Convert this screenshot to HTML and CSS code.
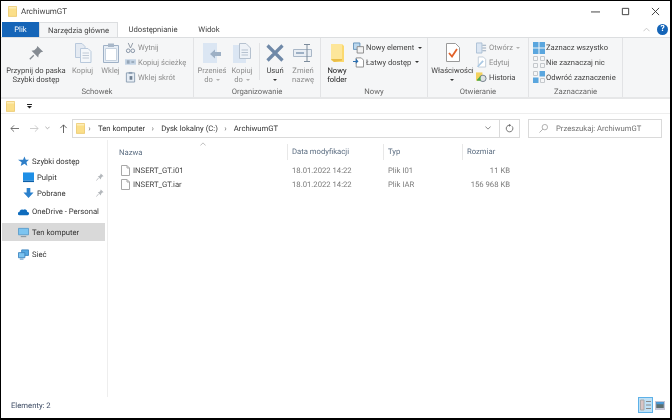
FILE: index.html
```html
<!DOCTYPE html>
<html lang="pl">
<head>
<meta charset="utf-8">
<title>ArchiwumGT</title>
<link rel="stylesheet" href="styles.css">
</head>
<body>
<svg class="defs" width="0" height="0" aria-hidden="true">
  <defs>
    <symbol id="folder" viewBox="0 0 12 14">
      <path d="M0.500 0.500H11.500V13.500H0.500Z" fill="#fbdf8a" stroke="#e8c25e" stroke-width="1"/>
      <path d="M1 1H11V3H1Z" fill="#fdeeb8"/>
    </symbol>
    <symbol id="doc" viewBox="0 0 9 11">
      <path d="M0.500 0.500H6L8.500 3V10.500H0.500Z" fill="#fff" stroke="#a8a8a8"/>
      <path d="M6 0.500V3H8.500" fill="none" stroke="#a8a8a8"/>
    </symbol>
    <symbol id="pin" viewBox="0 0 10 10">
      <path d="M6 0.500L9.500 4L8 4.500L6.500 6L6 8L2.200 4.200L4.200 3.600L5.600 2Z" fill="#b4b8bc"/>
      <path d="M3.200 6.200L0.500 9.500" stroke="#b4b8bc" fill="none"/>
    </symbol>
  </defs>
</svg>
<div class="window">
  <header class="titlebar">
    <svg class="title-icon"><use href="#folder"/></svg>
    <span class="title-text">ArchiwumGT</span>
    <div class="win-controls">
      <svg class="win-btn" viewBox="0 0 10 10"><path d="M0 5.500H10" stroke="#333"/></svg>
      <svg class="win-btn" viewBox="0 0 10 10"><path d="M1.500 1.500H8.500V8.500H1.500Z" fill="none" stroke="#333"/></svg>
      <svg class="win-btn" viewBox="0 0 10 10"><path d="M1 1L9 9M9 1L1 9" stroke="#333" fill="none"/></svg>
    </div>
  </header>

  <nav class="tabs">
    <span class="tab tab-file">Plik</span>
    <span class="tab tab-active">Narzędzia główne</span>
    <span class="tab tab-share">Udostępnianie</span>
    <span class="tab tab-view">Widok</span>
    <div class="tabs-right">
      <svg class="collapse" viewBox="0 0 8 5"><path d="M0.500 4.500L4 1L7.500 4.500" fill="none" stroke="#c4c4c4"/></svg>
      <span class="help">?</span>
    </div>
  </nav>

  <section class="ribbon">
    <div class="group g-clip">
      <div class="group-body">
        <div class="big w-pin">
          <svg class="big-icon" viewBox="0 0 18 18"><path d="M10.500 1L17 7.500L14.500 8.200L12 11L11.500 14L4 6.500L7 6L9.800 3.500Z" fill="#858b92"/><path d="M6.500 11.500L2 16" stroke="#858b92" stroke-width="1.500"/></svg>
          <span class="lbl">Przypnij do paska<br>Szybki dostęp</span>
        </div>
        <div class="big w-copy dis">
          <svg class="big-icon" viewBox="0 0 18 20"><path d="M1.500 0.500H8L11 3.500V14.500H1.500Z" fill="#e4eaf2" stroke="#b9c9dc"/><path d="M6.500 5.500H14L17 8.500V19.500H6.500Z" fill="#f4f7fa" stroke="#b9c9dc"/><path d="M8.500 10H15M8.500 12.500H15M8.500 15H15" stroke="#c0cad6"/></svg>
          <span class="lbl">Kopiuj</span>
        </div>
        <div class="big w-paste dis">
          <svg class="big-icon" viewBox="0 0 16 20"><path d="M0.500 2.500H15.500V19.500H0.500Z" fill="#e6edf5" stroke="#9fb1c6"/><path d="M2.500 5.500H13.500V17.500H2.500Z" fill="#fff" stroke="#c6d2df"/><path d="M5 0.500H11V4H5Z" fill="#a9b8c9"/></svg>
          <span class="lbl">Wklej</span>
        </div>
        <div class="small-col col-clip">
          <div class="small dis">
            <svg class="s-icon" viewBox="0 0 12 12"><path d="M3.500 0.500L6 6M8.500 0.500L6 6" stroke="#8a94a0" fill="none"/><circle cx="3.500" cy="9" r="2" fill="none" stroke="#7e8ca0"/><circle cx="8.500" cy="9" r="2" fill="none" stroke="#7e8ca0"/></svg>
            <span>Wytnij</span>
          </div>
          <div class="small dis">
            <svg class="s-icon" viewBox="0 0 12 12"><path d="M0 3H12V9H0Z" fill="#c3d3e4"/><path d="M2 5H5M2 7H5M7 6H10" stroke="#6f7f91"/></svg>
            <span>Kopiuj ścieżkę</span>
          </div>
          <div class="small dis">
            <svg class="s-icon" viewBox="0 0 12 12"><path d="M1.500 1.500H10.500V11.500H1.500Z" fill="#e6edf5" stroke="#8a9cb0"/><path d="M4 0.500H8V2.500H4Z" fill="#8a9cb0"/><path d="M5 5H8V9H5Z" fill="#6f7f91"/></svg>
            <span>Wklej skrót</span>
          </div>
        </div>
      </div>
      <div class="group-name">Schowek</div>
    </div>

    <div class="group g-org">
      <div class="group-body">
        <div class="big w-move dis">
          <svg class="big-icon" viewBox="0 0 18 20"><path d="M0 0H14V20H0Z" fill="#dbe6f3"/><path d="M7 11L12 6.500V9H18V13H12V15.500Z" fill="#9db0c5"/></svg>
          <span class="lbl">Przenieś<br>do <i class="caret-dis"></i></span>
        </div>
        <div class="big w-copyto dis">
          <svg class="big-icon" viewBox="0 0 18 20"><path d="M0 2H13V20H0Z" fill="#dbe6f3"/><path d="M6.500 0.500H13L17.500 5V15.500H6.500Z" fill="#eef2f7" stroke="#b5c1cf"/><path d="M8.500 7H15M8.500 9.500H15M8.500 12H15" stroke="#b5c1cf"/></svg>
          <span class="lbl">Kopiuj<br>do <i class="caret-dis"></i></span>
        </div>
        <div class="org-sep"></div>
        <div class="big w-del">
          <svg class="big-icon del-icon" viewBox="0 0 18 18"><path d="M1.500 1.500L16.500 16.500M16.500 1.500L1.500 16.500" stroke="#6f89a8" stroke-width="3.200"/></svg>
          <span class="lbl">Usuń<br><i class="caret"></i></span>
        </div>
        <div class="big w-ren dis">
          <svg class="big-icon ren-icon" viewBox="0 0 20 18"><path d="M0.500 5.500H18.500V12.500H0.500Z" fill="#e9eef4" stroke="#a9b7c7"/><path d="M3 8H11V10H3Z" fill="#9db0c5"/><path d="M11 0.500H17M11 17.500H17M14 0.500V17.500" stroke="#7d8c9c" fill="none"/></svg>
          <span class="lbl">Zmień<br>nazwę</span>
        </div>
      </div>
      <div class="group-name">Organizowanie</div>
    </div>

    <div class="group g-new">
      <div class="group-body">
        <div class="big w-newf">
          <svg class="big-icon folder-big" viewBox="0 0 13 18"><path d="M0 0H11L13 2V18H3L0 16Z" fill="#fbd96f"/><path d="M0 0H11V15H0Z" fill="#fde69a"/><path d="M0 15H11V16.500L3 18Z" fill="#e9bd48"/></svg>
          <span class="lbl strong">Nowy<br>folder</span>
        </div>
        <div class="small-col col-new">
          <div class="small">
            <svg class="s-icon" viewBox="0 0 12 12"><path d="M0.500 0.500H7.500V7.500H0.500Z" fill="#bcd8ee" stroke="#5f8fb8"/><path d="M4.500 4.500H11.500V11.500H4.500Z" fill="#f2f2f2" stroke="#888"/></svg>
            <span>Nowy element</span><i class="caret caret-inline"></i>
          </div>
          <div class="small">
            <svg class="s-icon" viewBox="0 0 12 12"><path d="M3.500 1.500H9L11.500 4V11.500H3.500Z" fill="#fff" stroke="#888"/><path d="M0 5H3V2L6 5.500L3 8V6H0Z" fill="#2c6fb0"/></svg>
            <span>Łatwy dostęp</span><i class="caret caret-inline"></i>
          </div>
        </div>
      </div>
      <div class="group-name">Nowy</div>
    </div>

    <div class="group g-open">
      <div class="group-body">
        <div class="big w-prop">
          <svg class="big-icon" viewBox="0 0 14 19"><path d="M0.500 0.500H9.500L13.500 4.500V18.500H0.500Z" fill="#fff" stroke="#9a9a9a"/><path d="M3 10L6 13.500L11 6" fill="none" stroke="#e2622a" stroke-width="1.800"/></svg>
          <span class="lbl">Właściwości<br><i class="caret"></i></span>
        </div>
        <div class="small-col col-open">
          <div class="small dis">
            <svg class="s-icon" viewBox="0 0 12 12"><path d="M0.500 0.500H6.500V11.500H0.500Z" fill="#dbe6f3" stroke="#a9bdd3"/><path d="M7 3H11M7 6H11M7 9H11" stroke="#8fa3b8"/></svg>
            <span>Otwórz</span><i class="caret-dis caret-inline"></i>
          </div>
          <div class="small dis">
            <svg class="s-icon" viewBox="0 0 12 12"><path d="M2.500 0.500H8L10.500 3V11.500H2.500Z" fill="#fff" stroke="#c0ccd8"/><path d="M1 11L7 4L8.500 5.500L2.500 11.500Z" fill="#a9c8e4"/></svg>
            <span>Edytuj</span>
          </div>
          <div class="small">
            <svg class="s-icon" viewBox="0 0 12 12"><path d="M0 1H7V10H0Z" fill="#f3d25e"/><circle cx="7.500" cy="7.500" r="3.500" fill="#dfe3e6" stroke="#6d7a85"/><path d="M1 9L5 5V10H1Z" fill="#4aa84a"/></svg>
            <span>Historia</span>
          </div>
        </div>
      </div>
      <div class="group-name">Otwieranie</div>
    </div>

    <div class="group g-sel">
      <div class="group-body">
        <div class="small-col col-sel">
          <div class="small">
            <svg class="s-icon sel" viewBox="0 0 12 12"><path d="M0 0H5.500V5.500H0ZM6.500 0H12V5.500H6.500ZM0 6.500H5.500V12H0ZM6.500 6.500H12V12H6.500Z" fill="#5aa6de"/></svg>
            <span>Zaznacz wszystko</span>
          </div>
          <div class="small">
            <svg class="s-icon sel" viewBox="0 0 12 12"><path d="M0.500 0.500H4.500V4.500H0.500ZM7.500 0.500H11.500V4.500H7.500ZM0.500 7.500H4.500V11.500H0.500ZM7.500 7.500H11.500V11.500H7.500Z" fill="none" stroke="#c4c8cc"/></svg>
            <span>Nie zaznaczaj nic</span>
          </div>
          <div class="small">
            <svg class="s-icon sel" viewBox="0 0 12 12"><path d="M6.500 0H12V5.500H6.500ZM0 6.500H5.500V12H0Z" fill="#5aa6de"/><path d="M0.500 0.500H4.500V4.500H0.500ZM7.500 7.500H11.500V11.500H7.500Z" fill="none" stroke="#c4c8cc"/></svg>
            <span>Odwróć zaznaczenie</span>
          </div>
        </div>
      </div>
      <div class="group-name">Zaznaczanie</div>
    </div>
  </section>

  <div class="qat">
    <svg class="qat-folder"><use href="#folder"/></svg>
    <svg class="qat-drop" viewBox="0 0 5 5"><path d="M0 0.500H5" stroke="#222"/><path d="M0 2H5L2.500 4.500Z" fill="#222"/></svg>
  </div>

  <div class="navbar">
    <div class="nav-btns">
      <svg class="nav-arrow" viewBox="0 0 10 10"><path d="M10 5H1M4.500 1.500L1 5L4.500 8.500" fill="none" stroke="#666"/></svg>
      <svg class="nav-arrow nav-fwd" viewBox="0 0 10 10"><path d="M0 5H9M5.500 1.500L9 5L5.500 8.500" fill="none" stroke="#c8c8c8"/></svg>
      <svg class="nav-chev" viewBox="0 0 6 4"><path d="M0.500 0.500L3 3L5.500 0.500" fill="none" stroke="#a0a0a0"/></svg>
      <svg class="nav-arrow nav-up" viewBox="0 0 10 10"><path d="M5 10V1M1.500 4.500L5 1L8.500 4.500" fill="none" stroke="#555"/></svg>
    </div>
    <div class="address">
      <svg class="addr-folder"><use href="#folder"/></svg>
      <span class="crumb-sep">›</span><span class="crumb">Ten komputer</span>
      <span class="crumb-sep">›</span><span class="crumb">Dysk lokalny (C:)</span>
      <span class="crumb-sep">›</span><span class="crumb">ArchiwumGT</span>
      <svg class="addr-chev" viewBox="0 0 8 5"><path d="M0.500 0.500L4 4L7.500 0.500" fill="none" stroke="#666"/></svg>
      <div class="addr-refresh">
        <svg viewBox="0 0 10 10" width="9" height="9"><path d="M7.800 2.500A3.700 3.700 0 1 1 5 1.300" fill="none" stroke="#666"/><path d="M4.500 0L7 1.500L4.500 3Z" fill="#666"/></svg>
      </div>
    </div>
    <div class="search">
      <svg class="search-icon" viewBox="0 0 10 10"><circle cx="6.500" cy="3.500" r="3" fill="none" stroke="#a8a8a8"/><path d="M4.300 5.700L0.500 9.500" stroke="#a8a8a8"/></svg>
      <span>Przeszukaj: ArchiwumGT</span>
    </div>
  </div>

  <main class="content">
    <aside class="sidebar">
      <div class="side-item lvl0 first">
        <svg class="side-icon" viewBox="0 0 12 12"><path d="M7 0.500L8.500 4H12L9.200 6.500L10.200 11L7 8.500L3 11L4 6.800L0 4H5.500Z" fill="#2f7fc8"/></svg>
        <span>Szybki dostęp</span>
      </div>
      <div class="side-item lvl1">
        <svg class="side-icon" viewBox="0 0 12 11"><path d="M0 0H12V9H0Z" fill="#1e8fe6"/><path d="M0 9H12V10.500H0Z" fill="#0d5fa8"/></svg>
        <span>Pulpit</span>
        <svg class="side-pin"><use href="#pin"/></svg>
      </div>
      <div class="side-item lvl1">
        <svg class="side-icon" viewBox="0 0 12 12"><path d="M4 0H8V5H11.500L6 11L0.500 5H4Z" fill="#2a80cc"/></svg>
        <span>Pobrane</span>
        <svg class="side-pin"><use href="#pin"/></svg>
      </div>
      <div class="side-item lvl0 onedrive">
        <svg class="side-icon" viewBox="0 0 12 8"><path d="M1.500 8A1.500 1.500 0 0 1 1.500 4.500A3 3 0 0 1 6 2.200A2.500 2.500 0 0 1 10 4.500A1.700 1.700 0 0 1 10.500 8Z" fill="#0f6cbd"/></svg>
        <span>OneDrive - Personal</span>
      </div>
      <div class="side-item lvl0 selected">
        <svg class="side-icon" viewBox="0 0 12 10"><path d="M0.500 0.500H11.500V7.500H0.500Z" fill="#7cc4f0" stroke="#5b9ccb"/><path d="M3 9.500H9" stroke="#7b8a96"/></svg>
        <span>Ten komputer</span>
      </div>
      <div class="side-item lvl0 network">
        <svg class="side-icon" viewBox="0 0 12 11"><path d="M4 0.500H11.500V6.500H4Z" fill="#56a9e2" stroke="#3f86bf"/><path d="M0.500 3.500H7.500V9H0.500Z" fill="#7cc4f0" stroke="#3f86bf"/><path d="M2 10.500H6" stroke="#3f86bf"/></svg>
        <span>Sieć</span>
      </div>
    </aside>

    <div class="list">
      <svg class="sort" viewBox="0 0 8 5"><path d="M0.500 4.500L4 1L7.500 4.500" fill="none" stroke="#aaa"/></svg>
      <div class="cols list-head">
        <span class="h-name">Nazwa</span>
        <span class="h-cell">Data modyfikacji</span>
        <span class="h-cell">Typ</span>
        <span class="h-cell">Rozmiar</span>
      </div>
      <div class="cols row">
        <span class="f-name"><svg class="f-icon"><use href="#doc"/></svg>INSERT_GT.i01</span>
        <span class="cell">18.01.2022 14:22</span>
        <span class="cell">Plik I01</span>
        <span class="cell size">11 KB</span>
      </div>
      <div class="cols row">
        <span class="f-name"><svg class="f-icon"><use href="#doc"/></svg>INSERT_GT.iar</span>
        <span class="cell">18.01.2022 14:22</span>
        <span class="cell">Plik IAR</span>
        <span class="cell size">156 968 KB</span>
      </div>
    </div>
  </main>

  <footer class="status">
    <span class="status-text">Elementy: 2</span>
    <div class="views">
      <span class="view view-on">
        <svg viewBox="0 0 12 12" width="12" height="12"><path d="M0.500 1H4V11H0.500Z" fill="#d9c4c4" stroke="#a9a9a9"/><path d="M6 2.500H11M6 6H11M6 9.500H11" stroke="#8a8a8a"/></svg>
      </span>
      <span class="view view-off">
        <svg viewBox="0 0 10 8" width="10" height="8"><path d="M0 0H10V8H0Z" fill="#5c6e70"/><path d="M0 0H10V3H0Z" fill="#4a9ad8"/></svg>
      </span>
    </div>
  </footer>
</div>
</body>
</html>
```

FILE: styles.css
```css
* { box-sizing: border-box; }
html, body { margin: 0; padding: 0; }
body {
  width: 672px;
  height: 420px;
  overflow: hidden;
  font-family: Roboto, "Noto Sans", sans-serif;
  font-size: 7.700px;
  text-rendering: geometricPrecision;
  color: #444;
  background: #000;
}
.defs { position: absolute; }
svg { display: block; flex: none; }

.window {
  width: 672px;
  height: 420px;
  background: #fff;
  border-style: solid;
  border-color: #000;
  border-width: 1px 2px 2px 1px;
  display: flex;
  flex-direction: column;
  filter: blur(0.3px);
}

/* title bar */
.titlebar {
  height: 21px;
  display: flex;
  align-items: center;
  padding-left: 7px;
  flex: none;
}
.title-icon { width: 9px; height: 11px; margin-right: 4px; }
.title-text { font-size: 8px; color: #444; }
.win-controls {
  margin-left: auto;
  display: flex;
  gap: 21px;
  padding-right: 10px;
}
.win-btn { width: 9px; height: 9px; }

/* tabs */
.tabs {
  height: 15px;
  display: flex;
  align-items: stretch;
  flex: none;
  font-size: 7.700px;
  position: relative;
}
.tab { display: flex; align-items: center; justify-content: center; }
.tab-file {
  width: 37px;
  margin-left: 1px;
  background: #1565b8;
  color: #fff;
}
.tab-active {
  width: 79px;
  background: #f5f6f7;
  border: 1px solid #dcdee0;
  border-bottom: 0;
}
.tab-share { width: 62px; margin-left: 4px; }
.tab-view { width: 50px; }
.tabs-right {
  margin-left: auto;
  display: flex;
  align-items: center;
  gap: 7px;
  padding-right: 2px;
}
.collapse { width: 7px; height: 5px; }
.help {
  width: 11px;
  height: 11px;
  border-radius: 50%;
  background: #1565b8;
  color: #fff;
  font-weight: 700;
  font-size: 8.500px;
  line-height: 11px;
  text-align: center;
}

/* ribbon */
.ribbon {
  height: 62px;
  flex: none;
  display: flex;
  background: #f5f6f7;
  border-top: 1px solid #dcdee0;
  border-bottom: 2px solid #e6e7e8;
}
.group {
  display: flex;
  flex-direction: column;
  border-right: 1px solid #e2e3e5;
  flex: none;
}
.g-clip { width: 193px; }
.g-org { width: 127px; }
.g-new { width: 107px; }
.g-open { width: 101px; }
.g-sel { width: 94px; }
.group-body {
  flex: 1;
  display: flex;
  align-items: flex-start;
  padding-top: 5px;
  min-height: 0;
}
.group-name {
  height: 12px;
  line-height: 14px;
  text-align: center;
  font-size: 7.700px;
  color: #666;
  flex: none;
}
.big {
  display: flex;
  flex-direction: column;
  align-items: center;
  flex: none;
  text-align: center;
  line-height: 9px;
  white-space: nowrap;
}
.big-icon { width: 18px; height: 20px; margin-bottom: 3px; }
.lbl { display: block; font-size: 7.600px; }
.strong { color: #222; }
.dis { color: #8e8e8e; }
.w-pin { width: 64px; margin-left: 3px; }
.w-pin .big-icon { height: 16px; margin: 2px 0 5px; }
.w-copy { width: 27px; margin-left: 1px; }
.w-paste { width: 27px; margin-left: 1px; }
.w-paste .big-icon { width: 16px; }
.small-col {
  display: flex;
  flex-direction: column;
  gap: 2.800px;
  flex: none;
  margin-top: -1.500px;
}
.small {
  display: flex;
  align-items: center;
  height: 12px;
  gap: 2px;
  font-size: 7.600px;
  white-space: nowrap;
}
.s-icon { width: 11px; height: 12px; }
.col-clip { margin-left: 1px; }
.w-move { width: 32px; margin-left: 2px; }
.w-copyto { width: 28px; }
.org-sep { width: 1px; height: 37px; background: #e2e3e5; margin: 0 1px 0 3px; flex: none; }
.w-del { width: 24px; margin-left: 2px; }
.del-icon { width: 18px; height: 18px; margin: 1px 0 4px; }
.w-ren { width: 32px; }
.ren-icon { width: 20px; height: 18px; margin: 1px 0 4px; }
.w-newf { width: 32px; }
.folder-big { width: 13px; height: 18px; margin: 1px 0 4px; }
.w-prop { width: 43px; margin-left: 3px; }
.w-prop .big-icon { width: 14px; height: 19px; margin: 0 0 4px; }
.col-open { margin-left: 2px; }
.col-sel { margin-left: 4px; }
.sel { width: 12px; margin-right: -1px; }
i.caret {
  display: inline-block;
  width: 0;
  height: 0;
  border: 2px solid transparent;
  border-top: 2.500px solid #333;
  border-bottom: 0;
  vertical-align: middle;
}
i.caret-dis {
  display: inline-block;
  width: 0;
  height: 0;
  border: 2px solid transparent;
  border-top: 2.500px solid #b0b0b0;
  border-bottom: 0;
  vertical-align: middle;
  margin-left: 1px;
}
.caret-inline { margin-left: 2px; }

/* quick access */
.qat {
  height: 15px;
  flex: none;
  display: flex;
  align-items: center;
  padding-left: 5px;
  border-bottom: 1px solid #eeeeee;
}
.qat-folder { width: 9px; height: 11px; margin-right: 12px; }
.qat-drop { width: 5px; height: 5px; }

/* nav bar */
.navbar {
  height: 26px;
  flex: none;
  display: flex;
  align-items: center;
  padding-top: 2px;
}
.nav-btns {
  width: 71px;
  display: flex;
  align-items: center;
  padding-left: 9px;
  flex: none;
}
.nav-arrow { width: 9px; height: 9px; }
.nav-fwd { margin-left: 11px; }
.nav-chev { width: 5px; height: 4px; margin-left: 6px; }
.nav-up { margin-left: 9px; }
.address {
  width: 448px;
  height: 19px;
  border: 1px solid #dadada;
  display: flex;
  align-items: center;
  padding-left: 3px;
  font-size: 7.700px;
  color: #333;
  flex: none;
}
.addr-folder { width: 9px; height: 11px; margin-right: 1px; }
.crumb-sep { color: #777; width: 7px; font-size: 8px; text-align: center; }
.crumb { margin: 0 4px 0 5px; }
.addr-chev { width: 6px; height: 4px; margin-left: auto; margin-right: 8px; }
.addr-refresh {
  width: 20px;
  height: 100%;
  border-left: 1px solid #dadada;
  display: flex;
  align-items: center;
  justify-content: center;
}
.search {
  width: 134px;
  height: 19px;
  margin-left: 8px;
  border: 1px solid #dadada;
  display: flex;
  align-items: center;
  padding-left: 10px;
  font-size: 7.700px;
  color: #707070;
  flex: none;
}
.search-icon { width: 9px; height: 9px; margin-right: 8px; }

/* content */
.content {
  flex: 1;
  display: flex;
  min-height: 0;
}
.sidebar {
  width: 107px;
  flex: none;
  border-right: 1px solid #eeeeee;
  padding-top: 13px;
  color: #333;
}
.side-item {
  display: flex;
  align-items: center;
  height: 16px;
  white-space: nowrap;
}
.side-icon { width: 11px; height: 11px; margin-right: 3px; }
.lvl0 { padding-left: 17px; }
.lvl1 { padding-left: 22px; }
.side-pin { width: 8px; height: 8px; margin-left: auto; margin-right: 3px; }
.onedrive { margin-top: 2px; }
.selected {
  margin: 4px 0 0 1px;
  padding-left: 16px;
  height: 18px;
  width: 103px;
  background: #d9d9d9;
}
.network { margin-top: 5px; }

.list {
  flex: 1;
  min-width: 0;
  position: relative;
  padding-top: 4px;
}
.sort { position: absolute; left: 92px; top: 2px; width: 6px; height: 4px; }
.cols {
  display: grid;
  grid-template-columns: 179px 96px 79px 53px;
  align-items: center;
  white-space: nowrap;
}
.list-head {
  height: 16px;
  margin-bottom: 3px;
  color: #5a6c80;
}
.h-name { padding-left: 11px; }
.h-cell {
  border-left: 1px solid #e8e8e8;
  padding-left: 4px;
  height: 16px;
  line-height: 15px;
}
.row { height: 14px; color: #7a7a7a; }
.f-name {
  display: flex;
  align-items: center;
  color: #444;
  padding-left: 13px;
}
.f-icon { width: 9px; height: 11px; margin-right: 3px; }
.cell { padding-left: 5px; }
.size { text-align: right; padding-right: 5px; }

/* status */
.status {
  height: 21px;
  flex: none;
  display: flex;
  align-items: flex-start;
  padding-left: 10px;
  color: #3c4a63;
}
.status-text { margin-top: 3px; line-height: 11px; }
.views {
  margin-left: auto;
  display: flex;
  align-items: center;
  gap: 2px;
  padding-right: 5px;
}
.view { display: flex; align-items: center; justify-content: center; }
.view-on {
  width: 15px;
  height: 16px;
  background: #bfe0f5;
  border: 1px solid #5db1e8;
}
.view-off {
  width: 10px;
  height: 9px;
  background: #c6c6d8;
  padding: 1px;
}
.view-off svg { width: 8px; height: 6px; }
```
